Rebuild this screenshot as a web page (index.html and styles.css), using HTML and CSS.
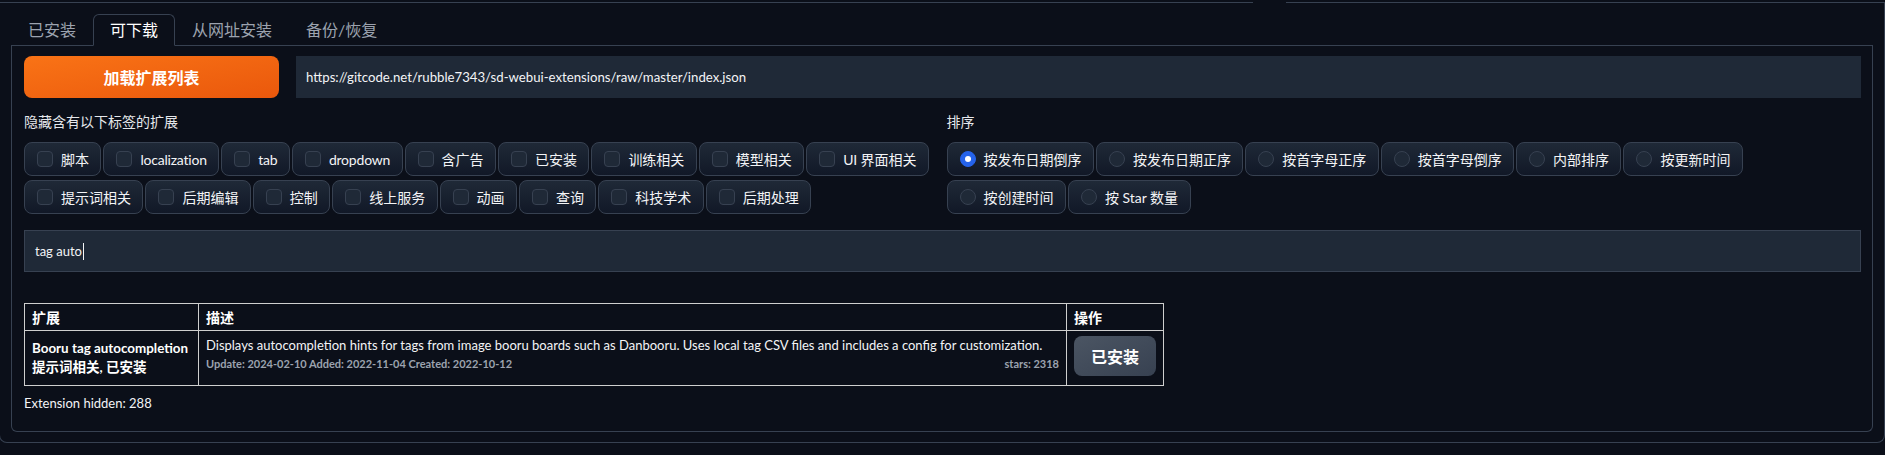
FILE: index.html
```html
<!DOCTYPE html>
<html lang="zh">
<head>
<meta charset="utf-8">
<title>Extensions</title>
<link rel="stylesheet" href="styles.css">
</head>
<body>
<div class="top-strip">
  <div class="strip-left"></div>
  <div class="strip-right"></div>
</div>
<div class="outer">
  <div class="tab-nav">
    <div class="tab">已安装</div>
    <div class="tab selected">可下载</div>
    <div class="tab">从网址安装</div>
    <div class="tab">备份/恢复</div>
  </div>
  <div class="panel">
    <div class="load-row">
      <button class="btn-primary">加载扩展列表</button>
      <div class="url-input">https://gitcode.net/rubble7343/sd-webui-extensions/raw/master/index.json</div>
    </div>
    <div class="filters">
      <div class="filter-col">
        <div class="group-label">隐藏含有以下标签的扩展</div>
        <div class="pills">
          <div class="pill-row">
            <label class="pill"><span class="check"></span>脚本</label>
            <label class="pill"><span class="check"></span><span class="en">localization</span></label>
            <label class="pill"><span class="check"></span><span class="en">tab</span></label>
            <label class="pill"><span class="check"></span><span class="en">dropdown</span></label>
            <label class="pill"><span class="check"></span>含广告</label>
            <label class="pill"><span class="check"></span>已安装</label>
            <label class="pill"><span class="check"></span>训练相关</label>
            <label class="pill"><span class="check"></span>模型相关</label>
            <label class="pill"><span class="check"></span><span><span class="en">UI</span> 界面相关</span></label>
          </div>
          <div class="pill-row">
            <label class="pill"><span class="check"></span>提示词相关</label>
            <label class="pill"><span class="check"></span>后期编辑</label>
            <label class="pill"><span class="check"></span>控制</label>
            <label class="pill"><span class="check"></span>线上服务</label>
            <label class="pill"><span class="check"></span>动画</label>
            <label class="pill"><span class="check"></span>查询</label>
            <label class="pill"><span class="check"></span>科技学术</label>
            <label class="pill"><span class="check"></span>后期处理</label>
          </div>
        </div>
      </div>
      <div class="filter-col">
        <div class="group-label">排序</div>
        <div class="pills">
          <div class="pill-row">
            <label class="pill"><span class="radio on"></span>按发布日期倒序</label>
            <label class="pill"><span class="radio"></span>按发布日期正序</label>
            <label class="pill"><span class="radio"></span>按首字母正序</label>
            <label class="pill"><span class="radio"></span>按首字母倒序</label>
            <label class="pill"><span class="radio"></span>内部排序</label>
            <label class="pill"><span class="radio"></span>按更新时间</label>
          </div>
          <div class="pill-row">
            <label class="pill"><span class="radio"></span>按创建时间</label>
            <label class="pill"><span class="radio"></span>按 Star 数量</label>
          </div>
        </div>
      </div>
    </div>
    <div class="search-box">tag auto<span class="caret"></span></div>
    <table class="ext-table">
      <thead>
        <tr>
          <th class="col-ext">扩展</th>
          <th class="col-desc">描述</th>
          <th class="col-act">操作</th>
        </tr>
      </thead>
      <tbody>
        <tr>
          <td class="ext-name"><div class="ext-title">Booru tag autocompletion</div><div class="ext-tags">提示词相关, 已安装</div></td>
          <td class="desc">
            <div class="desc-text">Displays autocompletion hints for tags from image booru boards such as Danbooru. Uses local tag CSV files and includes a config for customization.</div>
            <div class="meta"><span class="dates">Update: 2024-02-10 Added: 2022-11-04 Created: 2022-10-12</span><span class="stars">stars: 2318</span></div>
          </td>
          <td class="act"><button class="btn-secondary">已安装</button></td>
        </tr>
      </tbody>
    </table>
    <div class="hidden-count">Extension hidden: 288</div>
  </div>
</div>
</body>
</html>
```
FILE: styles.css
```css
* { box-sizing: border-box; }
html, body {
  margin: 0;
  padding: 0;
  background: #0b0f19;
  color: #e5e7eb;
  font-family: "Lato", "Noto Sans CJK SC", sans-serif;
  font-size: 14px;
}
.top-strip {
  display: flex;
  gap: 33px;
  height: 3px;
}
.strip-left {
  width: 1253px;
  border-bottom: 1px solid #374151;
}
.strip-right {
  flex: 1;
  border-bottom: 1px solid #374151;
}
.outer {
  margin-left: -1px;
  border: 1px solid #374151;
  border-top: none;
  border-radius: 0 0 8px 8px;
  padding: 11px 11px 10px 11px;
}
.tab-nav {
  display: flex;
  border-bottom: 1px solid #374151;
}
.tab {
  height: 32px;
  margin-bottom: -1px;
  padding: 0 16px;
  border: 1px solid transparent;
  border-radius: 6px 6px 0 0;
  font-size: 16px;
  line-height: 30px;
  color: #9ca3af;
}
.tab.selected {
  border-color: #374151;
  border-bottom-color: #0b0f19;
  color: #ffffff;
  background: #0b0f19;
}
.panel {
  border: 1px solid #374151;
  border-top: none;
  border-radius: 0 0 6px 6px;
  padding: 10px 11px 18px 12px;
}
.load-row {
  display: flex;
  gap: 17px;
  height: 42px;
}
.btn-primary {
  width: 255px;
  border: none;
  border-radius: 8px;
  background: linear-gradient(to bottom right, #f97316, #ea580c);
  color: #ffffff;
  font-family: inherit;
  font-size: 16px;
  font-weight: 700;
}
.url-input {
  flex: 1;
  background: #1f2937;
  padding: 0 10px;
  line-height: 42px;
  font-size: 13.2px;
  color: #f3f4f6;
}
.filters {
  display: grid;
  grid-template-columns: 1fr 1fr;
  gap: 8px;
  margin-top: 14px;
}
.group-label {
  line-height: 20px;
  margin-bottom: 10px;
  color: #e5e7eb;
}
.pills {
  display: flex;
  flex-direction: column;
  gap: 4px;
}
.pill-row {
  display: flex;
  gap: 2px;
}
.pill {
  display: flex;
  align-items: center;
  gap: 8px;
  height: 34px;
  padding: 0 11.4px 0 12px;
  border: 1px solid #374151;
  border-radius: 8px;
  background: linear-gradient(to top, #111827, #1f2937);
  color: #f3f4f6;
  white-space: nowrap;
}
.en { letter-spacing: -0.2px; }
.check {
  width: 16px;
  height: 16px;
  border: 1px solid #374151;
  border-radius: 4px;
  background: #1f2937;
  flex: none;
}
.radio {
  width: 16px;
  height: 16px;
  border: 1px solid #374151;
  border-radius: 50%;
  background: #1f2937;
  flex: none;
  display: flex;
  align-items: center;
  justify-content: center;
}
.radio.on {
  background: #2563eb;
  border-color: #2563eb;
}
.radio.on::after {
  content: "";
  width: 6px;
  height: 6px;
  border-radius: 50%;
  background: #ffffff;
}
.search-box {
  margin-top: 16px;
  height: 42px;
  border: 1px solid #374151;
  background: #1f2937;
  padding: 0 10px;
  font-size: 13px;
  color: #f3f4f6;
  display: flex;
  align-items: center;
}
.caret {
  display: inline-block;
  width: 1px;
  height: 17px;
  margin-left: 1px;
  background: #f3f4f6;
}
.ext-table {
  margin-top: 31px;
  width: 1140px;
  border-collapse: collapse;
  table-layout: fixed;
}
.ext-table th, .ext-table td {
  border: 1px solid #cfcfcf;
  padding: 0 7px;
  text-align: left;
}
.ext-table th {
  height: 27px;
  font-weight: 700;
  color: #ffffff;
}
.col-ext { width: 174px; }
.col-act { width: 97px; }
.ext-name {
  font-weight: 700;
  line-height: 19px;
  color: #ffffff;
  vertical-align: middle;
  white-space: nowrap;
}
.ext-title { font-size: 13.4px; }
.ext-tags { font-size: 13.5px; }
.desc {
  vertical-align: top;
  padding-top: 4px !important;
}
.desc-text {
  font-size: 13px;
  line-height: 20px;
  color: #f3f4f6;
  white-space: nowrap;
}
.meta {
  display: flex;
  justify-content: space-between;
  font-size: 11px;
  font-weight: 700;
  line-height: 18px;
  color: #9ca3af;
  width: 853px;
}
.act {
  vertical-align: top;
  padding-top: 5px !important;
  height: 55px;
}
.btn-secondary {
  width: 82px;
  height: 40px;
  border: none;
  border-radius: 8px;
  background: linear-gradient(to bottom right, #4b5563, #374151);
  color: #ffffff;
  font-family: inherit;
  font-size: 16px;
  font-weight: 600;
}
.hidden-count {
  margin-top: 7px;
  font-size: 13px;
  line-height: 20px;
  color: #f3f4f6;
}
```
